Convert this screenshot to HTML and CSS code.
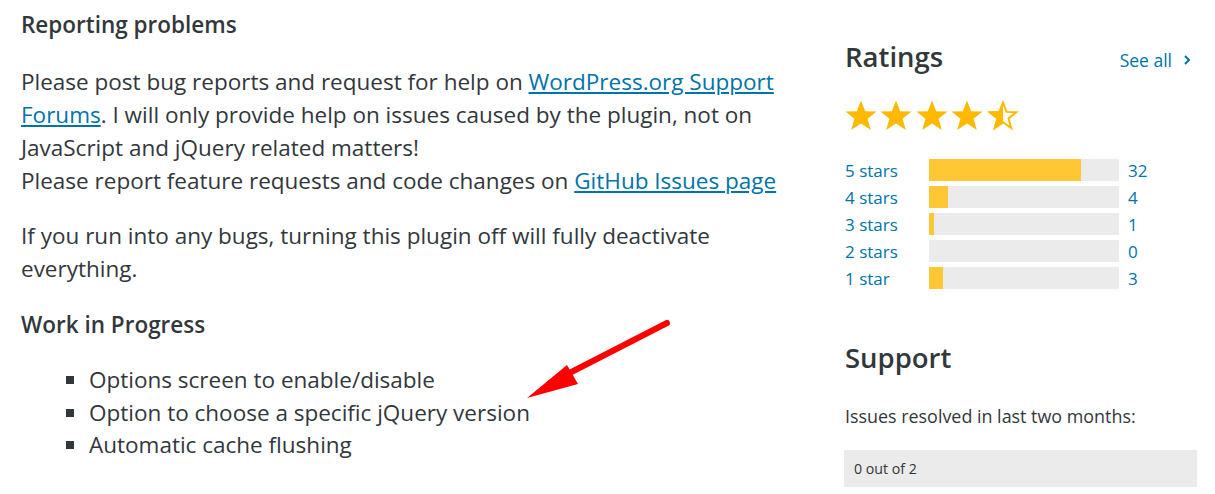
FILE: index.html
```html
<!DOCTYPE html>
<html lang="en">
<head>
<meta charset="utf-8">
<title>Plugin details</title>
<link rel="stylesheet" href="styles.css">
</head>
<body>
<div class="page">
  <main class="content">
    <h3 class="subhead first">Reporting problems</h3>
    <p class="para first-para">Please post bug reports and request for help on <a href="#">WordPress.org Support Forums</a>. I will only provide help on issues caused by the plugin, not on JavaScript and jQuery related matters!<br>Please report feature requests and code changes on <a href="#">GitHub Issues page</a></p>
    <p class="para second-para">If you run into any bugs, turning this plugin off will fully deactivate everything.</p>
    <h3 class="subhead wip">Work in Progress</h3>
    <ul class="todo">
      <li>Options screen to enable/disable</li>
      <li>Option to choose a specific jQuery version</li>
      <li>Automatic cache flushing</li>
    </ul>
    <svg class="arrow" width="180" height="110" viewBox="0 0 180 110">
      <line x1="157" y1="13" x2="40" y2="73" stroke="#ff0000" stroke-width="6" stroke-linecap="round"/>
      <polygon points="17,88 57,55 68,74" fill="#ff0000"/>
    </svg>
  </main>
  <aside class="sidebar">
    <div class="widget-head">
      <h2 class="widget-title">Ratings</h2>
      <a class="see-all" href="#">See all <svg class="chev" width="10" height="12" viewBox="0 0 10 12"><path d="M3 2 L7 6 L3 10" fill="none" stroke="#0073aa" stroke-width="2"/></svg></a>
    </div>
    <div class="stars">
      <svg class="star" viewBox="0 0 34 34"><polygon class="full" points="17,1.5 21.2,12.3 32.5,12.6 23.6,19.7 26.8,31 17,24.4 7.2,31 10.4,19.7 1.5,12.6 12.8,12.3"/></svg>
      <svg class="star" viewBox="0 0 34 34"><polygon class="full" points="17,1.5 21.2,12.3 32.5,12.6 23.6,19.7 26.8,31 17,24.4 7.2,31 10.4,19.7 1.5,12.6 12.8,12.3"/></svg>
      <svg class="star" viewBox="0 0 34 34"><polygon class="full" points="17,1.5 21.2,12.3 32.5,12.6 23.6,19.7 26.8,31 17,24.4 7.2,31 10.4,19.7 1.5,12.6 12.8,12.3"/></svg>
      <svg class="star" viewBox="0 0 34 34"><polygon class="full" points="17,1.5 21.2,12.3 32.5,12.6 23.6,19.7 26.8,31 17,24.4 7.2,31 10.4,19.7 1.5,12.6 12.8,12.3"/></svg>
      <svg class="star" viewBox="0 0 34 34"><polygon class="outline" points="17,3.5 20.5,12.9 30.2,13.3 22.5,19.4 25.2,29 17,23.3 8.8,29 11.5,19.4 3.8,13.3 13.5,12.9"/><polygon class="full" points="17,1.5 17,24.4 7.2,31 10.4,19.7 1.5,12.6 12.8,12.3"/></svg>
    </div>
    <ul class="counts">
      <li class="count-row"><a href="#" class="count-label">5 stars</a><span class="bar"><span class="fill" style="width:80%"></span></span><a href="#" class="count-num">32</a></li>
      <li class="count-row"><a href="#" class="count-label">4 stars</a><span class="bar"><span class="fill" style="width:10%"></span></span><a href="#" class="count-num">4</a></li>
      <li class="count-row"><a href="#" class="count-label">3 stars</a><span class="bar"><span class="fill" style="width:2.5%"></span></span><a href="#" class="count-num">1</a></li>
      <li class="count-row"><a href="#" class="count-label">2 stars</a><span class="bar"><span class="fill" style="width:0%"></span></span><a href="#" class="count-num">0</a></li>
      <li class="count-row"><a href="#" class="count-label">1 star</a><span class="bar"><span class="fill" style="width:7.5%"></span></span><a href="#" class="count-num">3</a></li>
    </ul>
    <h2 class="widget-title support-title">Support</h2>
    <p class="support-text">Issues resolved in last two months:</p>
    <div class="resolved">0 out of 2</div>
  </aside>
</div>
</body>
</html>
```
FILE: styles.css
```css
html, body {
  margin: 0;
  padding: 0;
  background: #ffffff;
}
body {
  font-family: "Open Sans", "Noto Sans", sans-serif;
  color: #32373c;
  overflow: hidden;
}
a {
  color: #0073aa;
}
.page {
  display: flex;
  padding-left: 21px;
}
.content {
  position: relative;
  width: 790px;
  flex: none;
}
.subhead {
  font-size: 22.5px;
  font-weight: 600;
  line-height: 33px;
  margin: 0;
}
.subhead.first {
  margin-top: 8px;
}
.para {
  font-size: 22.5px;
  line-height: 33px;
  margin: 0;
}
.first-para {
  margin-top: 24px;
}
.second-para {
  margin-top: 22px;
}
.subhead.wip {
  margin-top: 23px;
}
.todo {
  list-style: square;
  margin: 23px 0 0;
  padding-left: 68px;
  font-size: 22.5px;
  line-height: 32.5px;
}
.arrow {
  position: absolute;
  left: 489px;
  top: 310px;
}
.sidebar {
  margin-left: 34px;
  width: 352px;
  flex: none;
}
.widget-head {
  display: flex;
  justify-content: space-between;
  align-items: center;
  margin-top: 37px;
  height: 40px;
}
.widget-title {
  font-size: 27.5px;
  font-weight: 600;
  line-height: 40px;
  margin: 0;
}
.see-all {
  font-size: 17.5px;
  text-decoration: none;
  display: flex;
  align-items: center;
  gap: 10px;
  margin-right: 5px;
  margin-top: 6px;
}
.stars {
  display: flex;
  margin-top: 22px;
  margin-left: -1px;
  height: 34px;
}
.star {
  width: 34px;
  height: 34px;
  flex: none;
  margin-right: 1.4px;
}
.star .full {
  fill: #ffb900;
}
.star .outline {
  fill: none;
  stroke: #ffb900;
  stroke-width: 2;
}
.counts {
  list-style: none;
  margin: 26px 0 0;
  padding: 0;
}
.count-row {
  display: flex;
  align-items: center;
  height: 22px;
  margin-bottom: 5px;
  font-size: 17px;
}
.count-label {
  width: 84px;
  text-decoration: none;
  flex: none;
}
.bar {
  width: 190px;
  height: 22px;
  background: #ebebeb;
  flex: none;
  display: flex;
}
.fill {
  background: #ffc733;
  height: 100%;
}
.count-num {
  margin-left: 9px;
  text-decoration: none;
}
.support-title {
  margin-top: 49px;
}
.support-text {
  font-size: 17.9px;
  line-height: 26px;
  margin: 25px 0 0;
}
.resolved {
  margin-top: 21px;
  background: #ebebeb;
  font-size: 14.2px;
  line-height: 37px;
  padding-left: 10px;
  margin-left: -1px;
}
```
